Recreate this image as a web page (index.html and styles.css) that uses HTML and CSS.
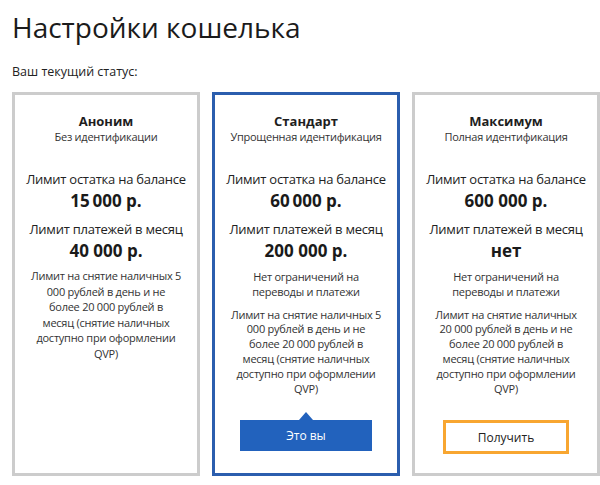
FILE: index.html
```html
<!DOCTYPE html>
<html lang="ru">
<head>
<meta charset="utf-8">
<link rel="stylesheet" href="styles.css">
</head>
<body>
<div class="page">
  <h1 class="title">Настройки кошелька</h1>
  <p class="status">Ваш текущий статус:</p>
  <div class="cards">
    <div class="card">
      <div class="card-name">Аноним</div>
      <div class="card-sub">Без идентификации</div>
      <div class="limit-label first">Лимит остатка на балансе</div>
      <div class="limit-value">15&#8201;000 р.</div>
      <div class="limit-label">Лимит платежей в месяц</div>
      <div class="limit-value">40 000 р.</div>
      <p class="note note-first">Лимит на снятие наличных 5<br>000 рублей в день и не<br>более 20 000 рублей в<br>месяц (снятие наличных<br>доступно при оформлении<br>QVP)</p>
    </div>
    <div class="card card-current">
      <div class="card-name">Стандарт</div>
      <div class="card-sub">Упрощенная идентификация</div>
      <div class="limit-label first">Лимит остатка на балансе</div>
      <div class="limit-value">60&#8201;000 р.</div>
      <div class="limit-label">Лимит платежей в месяц</div>
      <div class="limit-value">200 000 р.</div>
      <p class="note">Нет ограничений на<br>переводы и платежи</p>
      <p class="note">Лимит на снятие наличных 5<br>000 рублей в день и не<br>более 20 000 рублей в<br>месяц (снятие наличных<br>доступно при оформлении<br>QVP)</p>
      <div class="action">
        <div class="btn btn-current">Это вы</div>
      </div>
    </div>
    <div class="card">
      <div class="card-name">Максимум</div>
      <div class="card-sub">Полная идентификация</div>
      <div class="limit-label first">Лимит остатка на балансе</div>
      <div class="limit-value">600 000 р.</div>
      <div class="limit-label">Лимит платежей в месяц</div>
      <div class="limit-value">нет</div>
      <p class="note">Нет ограничений на<br>переводы и платежи</p>
      <p class="note">Лимит на снятие наличных<br>20 000 рублей в день и не<br>более 20 000 рублей в<br>месяц (снятие наличных<br>доступно при оформлении<br>QVP)</p>
      <div class="action">
        <div class="btn btn-get">Получить</div>
      </div>
    </div>
  </div>
</div>
</body>
</html>
```
FILE: styles.css
```css
html, body {
  margin: 0;
  padding: 0;
  background: #fff;
}
body {
  font-family: "Open Sans", "Liberation Sans", sans-serif;
  color: #222;
  overflow: hidden;
}
.page {
  padding: 0 0 0 12px;
  width: 588px;
}
.title {
  margin: 0;
  padding-top: 10px;
  font-size: 28px;
  line-height: 34px;
  font-weight: 400;
  color: #1b1b1b;
  letter-spacing: 0;
}
.status {
  margin: 19px 0 0;
  font-size: 12.5px;
  line-height: 18px;
  color: #222;
}
.cards {
  display: grid;
  grid-template-columns: repeat(3, 188px);
  gap: 12px;
  margin-top: 11px;
}
.card {
  border: 3px solid #cccccc;
  display: flex;
  flex-direction: column;
  align-items: center;
  text-align: center;
  padding: 17px 4px 19px;
  height: 384px;
  box-sizing: border-box;
  letter-spacing: -0.25px;
  white-space: nowrap;
}
.card-current {
  border-color: #2b5eae;
}
.card-name {
  font-size: 13px;
  font-weight: 700;
  line-height: 18px;
  color: #1e1e1e;
  letter-spacing: 0;
}
.card-sub {
  font-size: 11px;
  line-height: 14px;
  color: #333;
}
.limit-label {
  font-size: 13px;
  line-height: 18px;
  margin-top: 8px;
  color: #222;
}
.limit-label.first {
  margin-top: 26px;
}
.limit-value {
  font-size: 17px;
  font-weight: 700;
  line-height: 22px;
  margin-top: 2px;
  color: #1a1a1a;
  letter-spacing: 0;
}
.note {
  margin: 8px 0 0;
  font-size: 11px;
  line-height: 14.8px;
  color: #333;
}
.note-first {
  margin-top: 6px;
  line-height: 15.6px;
}
.action {
  margin-top: auto;
  height: 34px;
  display: flex;
  justify-content: center;
  align-items: flex-start;
  width: 100%;
}
.btn {
  box-sizing: border-box;
  display: flex;
  align-items: center;
  justify-content: center;
  font-size: 12px;
  letter-spacing: 0;
}
.btn-current {
  position: relative;
  width: 132px;
  height: 31px;
  background: #2262bd;
  color: #fff;
}
.btn-current::before {
  content: "";
  position: absolute;
  left: 50%;
  top: -8px;
  margin-left: -7px;
  border-left: 7px solid transparent;
  border-right: 7px solid transparent;
  border-bottom: 8px solid #2262bd;
}
.btn-get {
  width: 126px;
  height: 34px;
  border: 3px solid #f8a631;
  background: #fff;
  color: #222;
}
```
